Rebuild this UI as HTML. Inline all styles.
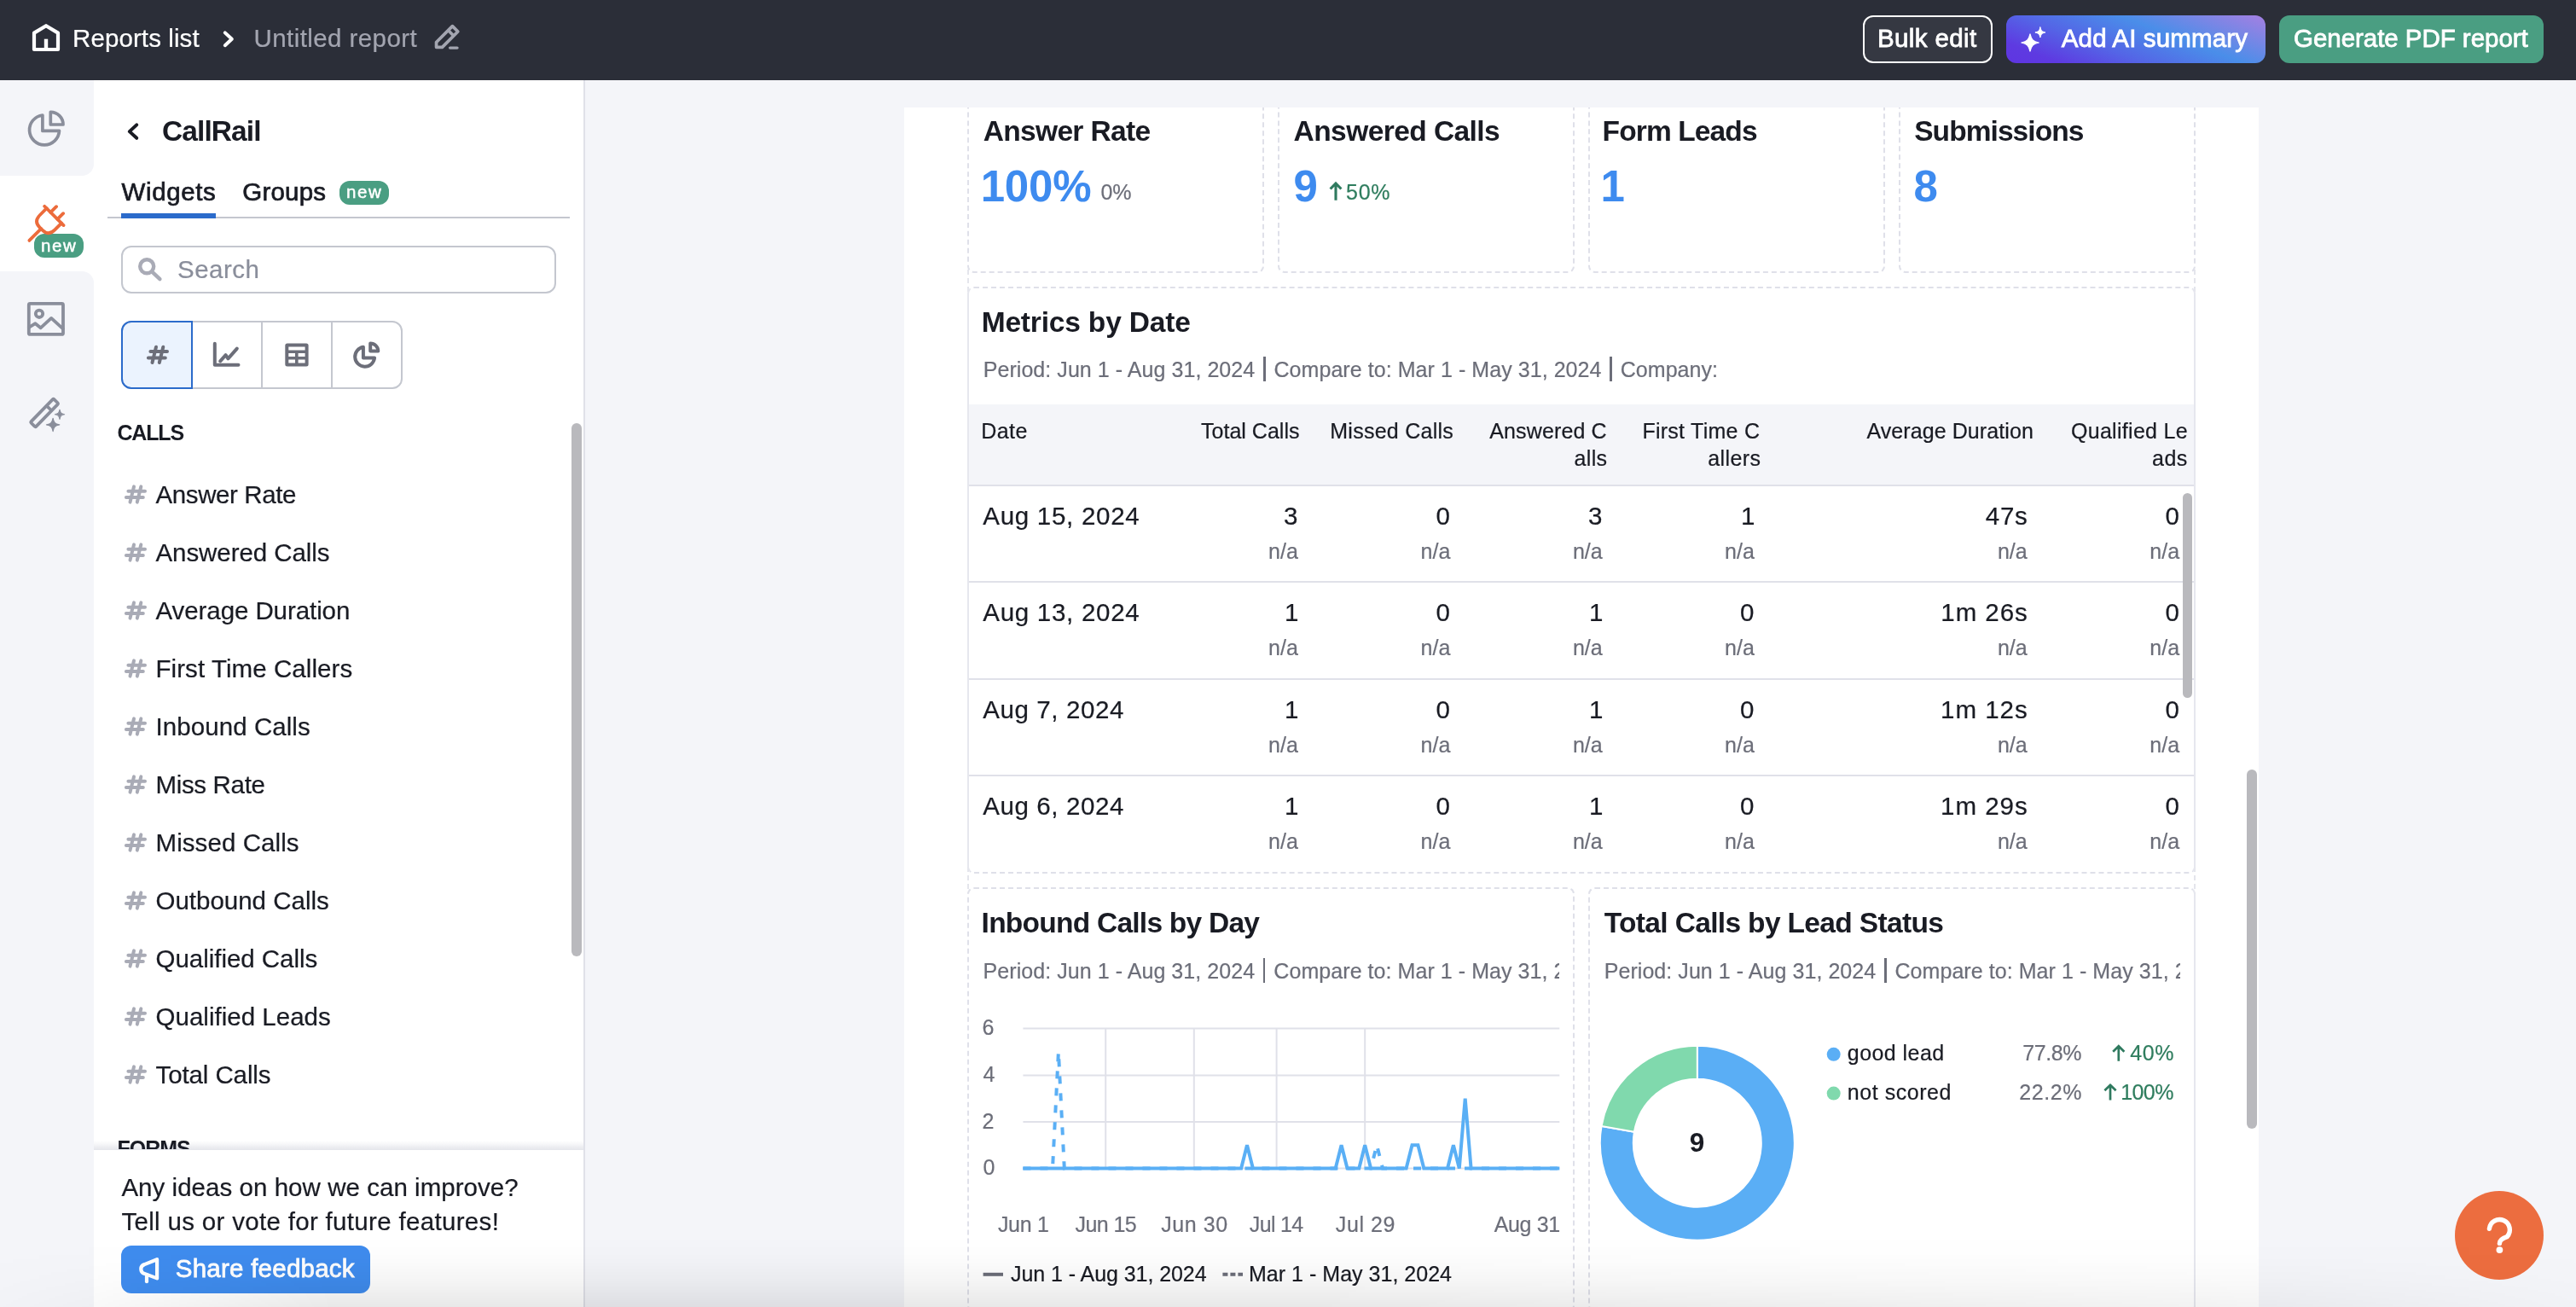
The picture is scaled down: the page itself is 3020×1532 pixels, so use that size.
<!DOCTYPE html>
<html><head><meta charset="utf-8"><title>Untitled report</title>
<style>
*{box-sizing:border-box;margin:0;padding:0}
html,body{width:3020px;height:1532px;overflow:hidden;background:#f4f5f9}
body{font-family:"Liberation Sans",sans-serif;color:#191b23;position:relative}
.a{position:absolute}
.t{position:absolute;white-space:pre;display:block;-webkit-text-stroke:.22px currentColor}
.card{position:absolute;border:2px dashed #dfe0e9;border-radius:8px;background:#fff}
.hl{position:absolute;left:1136px;width:1436px;height:2px;background:#e0e1e9}
svg{position:absolute;overflow:visible}
</style></head><body>

<!-- main area -->
<div class="a" style="left:1060px;top:126px;width:1588px;height:1406px;background:#fff"></div>
<!-- grid container dashed sides -->
<div class="a" style="left:1134px;top:126px;width:1440px;height:1406px;border-left:2px dashed #e4e5ec;border-right:2px dashed #e4e5ec"></div>

<!-- KPI cards -->
<div class="card" style="left:1134px;top:60px;width:348px;height:260px"></div>
<div class="card" style="left:1498px;top:60px;width:348px;height:260px"></div>
<div class="card" style="left:1862px;top:60px;width:348px;height:260px"></div>
<div class="card" style="left:2226px;top:60px;width:348px;height:260px"></div>
<div class="a" style="left:1060px;top:94px;width:1600px;height:32px;background:#f4f5f9"></div>

<!-- metrics table card -->
<div class="card" style="left:1134px;top:336px;width:1440px;height:688px;border-left:2px solid #e6e7ee;border-right:2px solid #e6e7ee"></div>
<div class="a" style="left:1136px;top:474px;width:1436px;height:95px;background:#f4f5f9"></div>
<div class="hl" style="top:568px"></div>
<div class="hl" style="top:681px"></div>
<div class="hl" style="top:795px"></div>
<div class="hl" style="top:908px"></div>
<div class="a" style="left:2559px;top:578px;width:11px;height:240px;border-radius:6px;background:#b9b9bd"></div>

<!-- bottom cards -->
<div class="card" style="left:1134px;top:1040px;width:712px;height:498px"></div>
<div class="card" style="left:1862px;top:1040px;width:712px;height:498px;border-right:2px solid #e6e7ee"></div>

<!-- line chart -->
<svg style="left:0;top:0" width="3020" height="1532" viewBox="0 0 3020 1532">
<g stroke="#e0e1e9" stroke-width="2" fill="none">
<path d="M1199.4 1205.6H1828.3M1199.4 1260.5H1828.3M1199.4 1315H1828.3M1199.4 1369.6H1828.3"/>
<path d="M1296.2 1205.6V1369.6M1399.8 1205.6V1369.6M1496.6 1205.6V1369.6M1600.2 1205.6V1369.6"/>
</g>
<path d="M1199.4 1369.6 L1206.3 1369.6 L1213.2 1369.6 L1220.1 1369.6 L1227.0 1369.6 L1234.0 1369.6 L1240.9 1232.9 L1247.8 1369.6 L1254.7 1369.6 L1261.6 1369.6 L1268.5 1369.6 L1275.4 1369.6 L1282.3 1369.6 L1289.2 1369.6 L1296.2 1369.6 L1303.1 1369.6 L1310.0 1369.6 L1316.9 1369.6 L1323.8 1369.6 L1330.7 1369.6 L1337.6 1369.6 L1344.5 1369.6 L1351.4 1369.6 L1358.4 1369.6 L1365.3 1369.6 L1372.2 1369.6 L1379.1 1369.6 L1386.0 1369.6 L1392.9 1369.6 L1399.8 1369.6 L1406.7 1369.6 L1413.6 1369.6 L1420.6 1369.6 L1427.5 1369.6 L1434.4 1369.6 L1441.3 1369.6 L1448.2 1369.6 L1455.1 1369.6 L1462.0 1369.6 L1468.9 1369.6 L1475.8 1369.6 L1482.8 1369.6 L1489.7 1369.6 L1496.6 1369.6 L1503.5 1369.6 L1510.4 1369.6 L1517.3 1369.6 L1524.2 1369.6 L1531.1 1369.6 L1538.0 1369.6 L1545.0 1369.6 L1551.9 1369.6 L1558.8 1369.6 L1565.7 1369.6 L1572.6 1369.6 L1579.5 1369.6 L1586.4 1369.6 L1593.3 1369.6 L1600.2 1369.6 L1607.1 1369.6 L1614.1 1342.3 L1621.0 1369.6 L1627.9 1369.6 L1634.8 1369.6 L1641.7 1369.6 L1648.6 1369.6 L1655.5 1369.6 L1662.4 1369.6 L1669.3 1369.6 L1676.3 1369.6 L1683.2 1369.6 L1690.1 1369.6 L1697.0 1369.6 L1703.9 1369.6 L1710.8 1369.6 L1717.7 1369.6 L1724.6 1369.6 L1731.5 1369.6 L1738.5 1369.6 L1745.4 1369.6 L1752.3 1369.6 L1759.2 1369.6 L1766.1 1369.6 L1773.0 1369.6 L1779.9 1369.6 L1786.8 1369.6 L1793.7 1369.6 L1800.7 1369.6 L1807.6 1369.6 L1814.5 1369.6 L1821.4 1369.6 L1828.3 1369.6" stroke="#5aaff5" stroke-width="4" stroke-dasharray="9 11" fill="none" stroke-linejoin="miter"/><path d="M1199.4 1369.6 L1206.3 1369.6 L1213.2 1369.6 L1220.1 1369.6 L1227.0 1369.6 L1234.0 1369.6 L1240.9 1369.6 L1247.8 1369.6 L1254.7 1369.6 L1261.6 1369.6 L1268.5 1369.6 L1275.4 1369.6 L1282.3 1369.6 L1289.2 1369.6 L1296.2 1369.6 L1303.1 1369.6 L1310.0 1369.6 L1316.9 1369.6 L1323.8 1369.6 L1330.7 1369.6 L1337.6 1369.6 L1344.5 1369.6 L1351.4 1369.6 L1358.4 1369.6 L1365.3 1369.6 L1372.2 1369.6 L1379.1 1369.6 L1386.0 1369.6 L1392.9 1369.6 L1399.8 1369.6 L1406.7 1369.6 L1413.6 1369.6 L1420.6 1369.6 L1427.5 1369.6 L1434.4 1369.6 L1441.3 1369.6 L1448.2 1369.6 L1455.1 1369.6 L1462.0 1342.3 L1468.9 1369.6 L1475.8 1369.6 L1482.8 1369.6 L1489.7 1369.6 L1496.6 1369.6 L1503.5 1369.6 L1510.4 1369.6 L1517.3 1369.6 L1524.2 1369.6 L1531.1 1369.6 L1538.0 1369.6 L1545.0 1369.6 L1551.9 1369.6 L1558.8 1369.6 L1565.7 1369.6 L1572.6 1342.3 L1579.5 1369.6 L1586.4 1369.6 L1593.3 1369.6 L1600.2 1342.3 L1607.1 1369.6 L1614.1 1369.6 L1621.0 1369.6 L1627.9 1369.6 L1634.8 1369.6 L1641.7 1369.6 L1648.6 1369.6 L1655.5 1342.3 L1662.4 1342.3 L1669.3 1369.6 L1676.3 1369.6 L1683.2 1369.6 L1690.1 1369.6 L1697.0 1369.6 L1703.9 1342.3 L1710.8 1369.6 L1717.7 1287.6 L1724.6 1369.6 L1731.5 1369.6 L1738.5 1369.6 L1745.4 1369.6 L1752.3 1369.6 L1759.2 1369.6 L1766.1 1369.6 L1773.0 1369.6 L1779.9 1369.6 L1786.8 1369.6 L1793.7 1369.6 L1800.7 1369.6 L1807.6 1369.6 L1814.5 1369.6 L1821.4 1369.6 L1828.3 1369.6" stroke="#5aaff5" stroke-width="4" fill="none" stroke-linejoin="miter"/>
<!-- legend markers -->
<path d="M1152.6 1493.8H1176" stroke="#6c6e79" stroke-width="4" fill="none"/>
<path d="M1433.4 1493.8H1457" stroke="#6c6e79" stroke-width="4" stroke-dasharray="6 3" fill="none"/>
<!-- donut -->
<path d="M1989.80 1225.80 A114 114 0 1 1 1877.53 1320.00 L1915.94 1326.78 A75 75 0 1 0 1989.80 1264.80Z" fill="#5aaef5" stroke="#fff" stroke-width="2"/><path d="M1877.53 1320.00 A114 114 0 0 1 1989.80 1225.80 L1989.80 1264.80 A75 75 0 0 0 1915.94 1326.78Z" fill="#80d9ad" stroke="#fff" stroke-width="2"/>
<circle cx="2149.7" cy="1235.8" r="8" fill="#5aaef5"/>
<circle cx="2149.7" cy="1281.6" r="8" fill="#80d9ad"/>
</svg>

<!-- page scrollbar -->
<div class="a" style="left:2634px;top:902px;width:12px;height:421px;border-radius:6px;background:#b9b9bd"></div>

<!-- header -->
<div class="a" style="left:0;top:0;width:3020px;height:94px;background:#2b2e38"></div>
<div class="a" style="left:2184px;top:18px;width:152px;height:56px;border:2px solid #fff;border-radius:12px;background:#353842"></div>
<div class="a" style="left:2352px;top:18px;width:304px;height:56px;border-radius:12px;background:linear-gradient(21deg,#5f35e1 0%,#5e3ae1 14%,#5465e6 36%,#4a8ee9 62%,#7b86e5 82%,#a57fe2 100%)"></div>
<div class="a" style="left:2672px;top:18px;width:310px;height:56px;border-radius:12px;background:#4a9e82"></div>

<!-- rail -->
<div class="a" style="left:0;top:94px;width:110px;height:1438px;background:#fff"></div>
<div class="a" style="left:0;top:94px;width:110px;height:112px;background:#f4f5f9;border-bottom-right-radius:14px"></div>
<div class="a" style="left:0;top:318px;width:110px;height:1214px;background:#f4f5f9;border-top-right-radius:14px"></div>

<!-- sidebar -->
<div class="a" style="left:110px;top:94px;width:576px;height:1438px;background:#fff;border-right:2px solid #e0e1e9"></div>
<div class="a" style="left:126px;top:254px;width:542px;height:2px;background:#c4c7cf"></div>
<div class="a" style="left:142px;top:250px;width:111px;height:6px;background:#2b6bcb"></div>
<div class="a" style="left:398px;top:212px;width:58px;height:28px;border-radius:12px;background:#4a9e82"></div>
<div class="a" style="left:142px;top:288px;width:510px;height:56px;border:2px solid #c4c7cf;border-radius:12px;background:#fff"></div>
<div class="a" style="left:142px;top:376px;width:330px;height:80px;border:2px solid #c4c7cf;border-radius:12px;background:#fff"></div>
<div class="a" style="left:306px;top:376px;width:2px;height:80px;background:#c4c7cf"></div>
<div class="a" style="left:388px;top:376px;width:2px;height:80px;background:#c4c7cf"></div>
<div class="a" style="left:142px;top:376px;width:84px;height:80px;border:2px solid #2b6bcb;border-radius:12px 0 0 12px;background:#ebf3fe"></div>
<div class="a" style="left:670px;top:496px;width:12px;height:625px;border-radius:6px;background:#b9b9bd"></div>
<!-- footer of sidebar -->
<div class="a" style="left:110px;top:1348px;width:574px;height:184px;background:#fff"></div>
<div class="a" style="left:142px;top:1460px;width:292px;height:56px;border-radius:12px;background:#3f8cee"></div>
<div class="a" style="left:40px;top:274px;width:58px;height:28px;border-radius:12px;background:#4a9e82"></div>

<!-- icons -->
<svg style="left:0;top:0" width="3020" height="1532" viewBox="0 0 3020 1532" fill="none" stroke-linecap="round" stroke-linejoin="round">

<!-- home -->
<path d="M40 38.6L54 30.2L68 38.6V58H40Z" stroke="#fff" stroke-width="4.2"/>
<path d="M54 58V45.7" stroke="#fff" stroke-width="4.4" stroke-linecap="butt"/>
<!-- chevron right -->
<path d="M263.8 38.4L271.8 45.8L263.8 53.2" stroke="#fff" stroke-width="4"/>
<!-- pencil -->
<g stroke="#a3a5b0" stroke-width="3.7">
<path d="M530.4 30.6L536.8 37L518.45 55.35H511.55V49.45Z"/>
<path d="M525.45 35.55L531.85 41.95" stroke-linecap="butt"/>
<path d="M527.6 56.1H536" stroke-width="3.4"/>
</g>
<!-- sparkles (AI) -->
<path d="M2380 39.8 C2381.6 46.6 2383.4 48.4 2390.2 50 C2383.4 51.6 2381.6 53.4 2380 60.2 C2378.4 53.4 2376.6 51.6 2369.8 50 C2376.6 48.4 2378.4 46.6 2380 39.8Z" fill="#fff" stroke="#fff" stroke-width="1.2"/>
<path d="M2391.9 32 C2392.9 36 2393.9 37 2397.9 38 C2393.9 39 2392.9 40 2391.9 44 C2390.9 40 2389.9 39 2385.9 38 C2389.9 37 2390.9 36 2391.9 32Z" fill="#fff" stroke="#fff" stroke-width="1"/>
<!-- rail: pie -->
<g stroke="#8a8e9b" stroke-width="3.7">
<path d="M49.9 135A17.5 17.5 0 1 0 69.5 153.4H49.9Z"/>
<path d="M59.3 146V131.3A14.7 14.7 0 0 1 74 146Z"/>
</g>
<!-- rail: plug -->
<g stroke="#ec6b3b" stroke-width="3.8" transform="translate(63.35 252.9) rotate(45)">
<path d="M-15.8 0H15.8"/>
<path d="M-12.3 0V11Q-12.3 21.5 -2.5 21.5H2.5Q12.3 21.5 12.3 11V0"/>
<path d="M-5.7 0V-9.5M5.7 0V-9.5"/>
<path d="M0 21.5V41"/>
</g>
<!-- rail: image -->
<g stroke="#8a8e9b" stroke-width="3.8">
<rect x="33.8" y="355.9" width="40.2" height="36" rx="1.5"/>
<circle cx="46" cy="367.8" r="4.2"/>
<path d="M33.8 383.8L41.4 379.2L47.6 384.3L60.1 372.9L73.8 385.3"/>
</g>
<!-- rail: wand -->
<g stroke="#8a8e9b" stroke-width="3.7" transform="translate(52.1 484) rotate(-45.8)">
<rect x="-19.3" y="-4.1" width="38.6" height="8.2" rx="1.5"/>
<path d="M7.8 -4.1V4.1" stroke-linecap="butt"/>
</g>
<path d="M62.1 490.3 C62.9 495.4 64.6 497.1 69.7 497.9 C64.6 498.7 62.9 500.4 62.1 505.5 C61.3 500.4 59.6 498.7 54.5 497.9 C59.6 497.1 61.3 495.4 62.1 490.3Z" fill="#8a8e9b" stroke="#8a8e9b" stroke-width="1.3"/>
<path d="M70 480.2 C70.6 484 71.8 485.2 75.6 485.8 C71.8 486.4 70.6 487.6 70 491.4 C69.4 487.6 68.2 486.4 64.4 485.8 C68.2 485.2 69.4 484 70 480.2Z" fill="#8a8e9b" stroke="#8a8e9b" stroke-width="1.1"/>
<!-- back chevron -->
<path d="M160.2 146.4L151.8 154.1L160.2 161.8" stroke="#191b23" stroke-width="4"/>
<!-- search -->
<g stroke="#a9abb6" stroke-width="4.4">
<circle cx="172.2" cy="312.3" r="8"/>
<path d="M178.6 318.8L187.4 327.2"/>
</g>
<!-- toolbar: line chart -->
<g stroke="#6c6e79" stroke-width="4">
<path d="M251.8 402.7V427.8H279.5"/>
<path d="M258.2 423.3L264.6 416.2L267.4 420.3L277.8 408.6"/>
</g>
<!-- toolbar: table -->
<rect x="334.3" y="402.6" width="27.3" height="27" rx="2.5" fill="#6c6e79"/>
<rect x="338.3" y="406.5" width="19.3" height="4" fill="#fff"/>
<rect x="338.3" y="414" width="7.7" height="4" fill="#fff"/>
<rect x="349.6" y="414" width="8" height="4" fill="#fff"/>
<rect x="338.3" y="421.5" width="7.7" height="4" fill="#fff"/>
<rect x="349.6" y="421.5" width="8" height="4" fill="#fff"/>
<!-- toolbar: pie -->
<g stroke="#6c6e79" stroke-width="4">
<path d="M425.9 406.8A11.5 11.5 0 1 0 439.1 419.6H425.9Z"/>
<path d="M434.2 411.5V402.4A9.1 9.1 0 0 1 443.3 411.5Z"/>
</g>
<!-- megaphone -->
<g stroke="#fff" stroke-width="4.2">
<path d="M184.1 1476.2L169.4 1482.1A5.6 5.6 0 0 0 169.4 1492.9L184.1 1498.4Z"/>
<path d="M172 1494V1502.2"/>
</g>
<!-- arrows -->
<path d="M1559.6 221.5L1566 215.0L1572.4 221.5M1566 215.7V234.7" stroke="#2f7a5f" stroke-width="3.1" stroke-linecap="butt" stroke-linejoin="miter"/><path d="M2477.2 1232.7L2483.8 1226.2L2490.4 1232.7M2483.8 1226.9V1243.8" stroke="#2f7a5f" stroke-width="2.7" stroke-linecap="butt" stroke-linejoin="miter"/><path d="M2467.4 1278.3L2474 1271.8L2480.6 1278.3M2474 1272.5V1289.4" stroke="#2f7a5f" stroke-width="2.7" stroke-linecap="butt" stroke-linejoin="miter"/>
<path transform="translate(0 0)" d="M150.4 575.7H170M147.9 583H167.8M157 570.4L152.5 588.6M165.3 570.4L160.8 588.6" stroke="#a9abb6" stroke-width="4"/><path transform="translate(0 68)" d="M150.4 575.7H170M147.9 583H167.8M157 570.4L152.5 588.6M165.3 570.4L160.8 588.6" stroke="#a9abb6" stroke-width="4"/><path transform="translate(0 136)" d="M150.4 575.7H170M147.9 583H167.8M157 570.4L152.5 588.6M165.3 570.4L160.8 588.6" stroke="#a9abb6" stroke-width="4"/><path transform="translate(0 204)" d="M150.4 575.7H170M147.9 583H167.8M157 570.4L152.5 588.6M165.3 570.4L160.8 588.6" stroke="#a9abb6" stroke-width="4"/><path transform="translate(0 272)" d="M150.4 575.7H170M147.9 583H167.8M157 570.4L152.5 588.6M165.3 570.4L160.8 588.6" stroke="#a9abb6" stroke-width="4"/><path transform="translate(0 340)" d="M150.4 575.7H170M147.9 583H167.8M157 570.4L152.5 588.6M165.3 570.4L160.8 588.6" stroke="#a9abb6" stroke-width="4"/><path transform="translate(0 408)" d="M150.4 575.7H170M147.9 583H167.8M157 570.4L152.5 588.6M165.3 570.4L160.8 588.6" stroke="#a9abb6" stroke-width="4"/><path transform="translate(0 476)" d="M150.4 575.7H170M147.9 583H167.8M157 570.4L152.5 588.6M165.3 570.4L160.8 588.6" stroke="#a9abb6" stroke-width="4"/><path transform="translate(0 544)" d="M150.4 575.7H170M147.9 583H167.8M157 570.4L152.5 588.6M165.3 570.4L160.8 588.6" stroke="#a9abb6" stroke-width="4"/><path transform="translate(0 612)" d="M150.4 575.7H170M147.9 583H167.8M157 570.4L152.5 588.6M165.3 570.4L160.8 588.6" stroke="#a9abb6" stroke-width="4"/><path transform="translate(0 680)" d="M150.4 575.7H170M147.9 583H167.8M157 570.4L152.5 588.6M165.3 570.4L160.8 588.6" stroke="#a9abb6" stroke-width="4"/><path transform="translate(26 -163.6)" d="M150.4 575.7H170M147.9 583H167.8M157 570.4L152.5 588.6M165.3 570.4L160.8 588.6" stroke="#6c6e79" stroke-width="4"/>
</svg>

<!-- help -->
<div class="a" style="left:2878px;top:1396px;width:104px;height:104px;border-radius:52px;background:#ec6d3f"></div>
<svg style="left:0;top:0" width="3020" height="1532" viewBox="0 0 3020 1532" fill="none"><path d="M2918.4 1440.3A12 12 0 1 1 2939.2 1449.6Q2930.4 1452.5 2930.4 1457.4" stroke="#fff" stroke-width="5.4" stroke-linecap="round"/><circle cx="2930.4" cy="1465.1" r="3.9" fill="#fff"/></svg>

<div class="a" style="left:0;top:0;width:3020px;height:1532px;will-change:transform">
<span class="t" style="top:30px;font-size:29.5px;line-height:29.5px;color:#ffffff;letter-spacing:0.1px;left:85.0px;">Reports list</span>
<span class="t" style="top:30px;font-size:29.5px;line-height:29.5px;color:#a3a5b0;letter-spacing:0.42px;left:297.5px;">Untitled report</span>
<span class="t" style="top:30px;font-size:29.5px;line-height:29.5px;color:#ffffff;letter-spacing:0.38px;left:2201.0px;-webkit-text-stroke:.8px #fff;">Bulk edit</span>
<span class="t" style="top:30px;font-size:29.5px;line-height:29.5px;color:#ffffff;letter-spacing:0.13px;left:2416.8px;-webkit-text-stroke:.8px #fff;">Add AI summary</span>
<span class="t" style="top:30px;font-size:29.5px;line-height:29.5px;color:#ffffff;letter-spacing:-0.04px;left:2689.0px;-webkit-text-stroke:.8px #fff;">Generate PDF report</span>
<span class="t" style="top:137px;font-size:33.5px;line-height:33.5px;font-weight:700;-webkit-text-stroke:0;letter-spacing:-0.88px;left:189.9px;">CallRail</span>
<span class="t" style="top:210px;font-size:29.5px;line-height:29.5px;letter-spacing:0.6px;left:142.6px;-webkit-text-stroke:.7px #191b23;">Widgets</span>
<span class="t" style="top:210px;font-size:29.5px;line-height:29.5px;letter-spacing:0.2px;left:284.3px;-webkit-text-stroke:.7px #191b23;">Groups</span>
<span class="t" style="top:215px;font-size:20.5px;line-height:20.5px;color:#ffffff;letter-spacing:1.6px;left:406.0px;-webkit-text-stroke:.5px #fff;">new</span>
<span class="t" style="top:278px;font-size:20.5px;line-height:20.5px;color:#ffffff;letter-spacing:1.6px;left:48.0px;-webkit-text-stroke:.5px #fff;">new</span>
<span class="t" style="top:301px;font-size:29.5px;line-height:29.5px;color:#8a8e9b;letter-spacing:0.47px;left:208.0px;">Search</span>
<span class="t" style="top:495px;font-size:25.0px;line-height:25.0px;font-weight:700;-webkit-text-stroke:0;letter-spacing:-1.16px;left:137.4px;">CALLS</span>
<span class="t" style="top:565px;font-size:29.5px;line-height:29.5px;letter-spacing:-0.4px;left:182.5px;">Answer Rate</span>
<span class="t" style="top:633px;font-size:29.5px;line-height:29.5px;letter-spacing:-0.07px;left:182.5px;">Answered Calls</span>
<span class="t" style="top:701px;font-size:29.5px;line-height:29.5px;letter-spacing:-0.08px;left:182.5px;">Average Duration</span>
<span class="t" style="top:769px;font-size:29.5px;line-height:29.5px;letter-spacing:0.07px;left:182.5px;">First Time Callers</span>
<span class="t" style="top:837px;font-size:29.5px;line-height:29.5px;letter-spacing:0.07px;left:182.5px;">Inbound Calls</span>
<span class="t" style="top:905px;font-size:29.5px;line-height:29.5px;letter-spacing:-0.34px;left:182.5px;">Miss Rate</span>
<span class="t" style="top:973px;font-size:29.5px;line-height:29.5px;letter-spacing:0.08px;left:182.5px;">Missed Calls</span>
<span class="t" style="top:1041px;font-size:29.5px;line-height:29.5px;letter-spacing:-0.01px;left:182.5px;">Outbound Calls</span>
<span class="t" style="top:1109px;font-size:29.5px;line-height:29.5px;letter-spacing:-0.03px;left:182.5px;">Qualified Calls</span>
<span class="t" style="top:1177px;font-size:29.5px;line-height:29.5px;letter-spacing:0.02px;left:182.5px;">Qualified Leads</span>
<span class="t" style="top:1245px;font-size:29.5px;line-height:29.5px;letter-spacing:-0.1px;left:182.5px;">Total Calls</span>
<span class="t" style="top:1334px;font-size:25.0px;line-height:25.0px;font-weight:700;-webkit-text-stroke:0;letter-spacing:-0.97px;left:137.4px;height:13px;overflow:hidden;">FORMS</span>
<span class="t" style="top:1377px;font-size:29.5px;line-height:29.5px;letter-spacing:0.04px;left:142.4px;">Any ideas on how we can improve?</span>
<span class="t" style="top:1417px;font-size:29.5px;line-height:29.5px;letter-spacing:0.32px;left:142.4px;">Tell us or vote for future features!</span>
<span class="t" style="top:1472px;font-size:29.5px;line-height:29.5px;color:#ffffff;letter-spacing:0.24px;left:205.8px;-webkit-text-stroke:.8px #fff;">Share feedback</span>
<span class="t" style="top:137px;font-size:33.5px;line-height:33.5px;font-weight:700;-webkit-text-stroke:0;letter-spacing:-0.66px;left:1152.7px;">Answer Rate</span>
<span class="t" style="top:137px;font-size:33.5px;line-height:33.5px;font-weight:700;-webkit-text-stroke:0;letter-spacing:-0.57px;left:1516.6px;">Answered Calls</span>
<span class="t" style="top:137px;font-size:33.5px;line-height:33.5px;font-weight:700;-webkit-text-stroke:0;letter-spacing:-0.88px;left:1878.6px;">Form Leads</span>
<span class="t" style="top:137px;font-size:33.5px;line-height:33.5px;font-weight:700;-webkit-text-stroke:0;letter-spacing:-0.93px;left:2244.2px;">Submissions</span>
<span class="t" style="top:193px;font-size:51px;line-height:51px;font-weight:700;-webkit-text-stroke:0;color:#3e8bef;letter-spacing:-0.2px;left:1149.7px;">100%</span>
<span class="t" style="top:213px;font-size:25.0px;line-height:25.0px;color:#6c6e79;letter-spacing:-0.2px;left:1290.6px;">0%</span>
<span class="t" style="top:193px;font-size:51px;line-height:51px;font-weight:700;-webkit-text-stroke:0;color:#3e8bef;left:1516.4px;">9</span>
<span class="t" style="top:213px;font-size:25.0px;line-height:25.0px;color:#2f7d5e;letter-spacing:0.75px;left:1578.0px;">50%</span>
<span class="t" style="top:193px;font-size:51px;line-height:51px;font-weight:700;-webkit-text-stroke:0;color:#3e8bef;left:1876.5px;">1</span>
<span class="t" style="top:193px;font-size:51px;line-height:51px;font-weight:700;-webkit-text-stroke:0;color:#3e8bef;left:2243.5px;">8</span>
<span class="t" style="top:361px;font-size:33.5px;line-height:33.5px;font-weight:700;-webkit-text-stroke:0;letter-spacing:-0.18px;left:1150.7px;">Metrics by Date</span>
<span class="t" style="top:421px;font-size:25.0px;line-height:25.0px;color:#6c6e79;letter-spacing:0.06px;left:1152.7px;height:32px;line-height:32px;margin-top:-4.5px;">Period: Jun 1 - Aug 31, 2024 <span style="display:inline-block;width:2.4px;height:28.6px;background:#6c6e79;vertical-align:-5.4px;margin:0 2.9px"></span> Compare to: Mar 1 - May 31, 2024 <span style="display:inline-block;width:2.4px;height:28.6px;background:#6c6e79;vertical-align:-5.4px;margin:0 2.9px"></span> Company:</span>
<span class="t" style="top:493px;font-size:25.0px;line-height:25.0px;letter-spacing:0.4px;left:1150.3px;">Date</span>
<span class="t" style="top:493px;font-size:25.0px;line-height:25.0px;letter-spacing:0.02px;left:1408.0px;">Total Calls</span>
<span class="t" style="top:493px;font-size:25.0px;line-height:25.0px;letter-spacing:0.25px;left:1559.3px;">Missed Calls</span>
<span class="t" style="top:493px;font-size:25.0px;line-height:25.0px;letter-spacing:0.14px;left:1746.2px;">Answered C</span>
<span class="t" style="top:525px;font-size:25.0px;line-height:25.0px;letter-spacing:0.4px;left:1845.4px;">alls</span>
<span class="t" style="top:493px;font-size:25.0px;line-height:25.0px;letter-spacing:0.26px;left:1925.4px;">First Time C</span>
<span class="t" style="top:525px;font-size:25.0px;line-height:25.0px;letter-spacing:0.4px;left:2002.2px;">allers</span>
<span class="t" style="top:493px;font-size:25.0px;line-height:25.0px;letter-spacing:0.09px;left:2188.4px;">Average Duration</span>
<span class="t" style="top:493px;font-size:25.0px;line-height:25.0px;letter-spacing:0.29px;left:2428.0px;">Qualified Le</span>
<span class="t" style="top:525px;font-size:25.0px;line-height:25.0px;letter-spacing:0.4px;left:2523.1px;">ads</span>
<span class="t" style="top:590px;font-size:29.5px;line-height:29.5px;letter-spacing:0.72px;left:1152.3px;">Aug 15, 2024</span>
<span class="t" style="top:590px;font-size:29.5px;line-height:29.5px;letter-spacing:0.47px;left:1505.1px;">3</span>
<span class="t" style="top:634px;font-size:25.0px;line-height:25.0px;color:#6c6e79;letter-spacing:0.03px;left:1487.0px;">n/a</span>
<span class="t" style="top:590px;font-size:29.5px;line-height:29.5px;letter-spacing:0.47px;left:1683.6px;">0</span>
<span class="t" style="top:634px;font-size:25.0px;line-height:25.0px;color:#6c6e79;letter-spacing:0.03px;left:1665.5px;">n/a</span>
<span class="t" style="top:590px;font-size:29.5px;line-height:29.5px;letter-spacing:0.47px;left:1862.0px;">3</span>
<span class="t" style="top:634px;font-size:25.0px;line-height:25.0px;color:#6c6e79;letter-spacing:0.03px;left:1843.9px;">n/a</span>
<span class="t" style="top:590px;font-size:29.5px;line-height:29.5px;letter-spacing:0.47px;left:2041.1px;">1</span>
<span class="t" style="top:634px;font-size:25.0px;line-height:25.0px;color:#6c6e79;letter-spacing:0.03px;left:2022.0px;">n/a</span>
<span class="t" style="top:590px;font-size:29.5px;line-height:29.5px;letter-spacing:0.69px;left:2327.8px;">47s</span>
<span class="t" style="top:634px;font-size:25.0px;line-height:25.0px;color:#6c6e79;letter-spacing:0.03px;left:2341.9px;">n/a</span>
<span class="t" style="top:590px;font-size:29.5px;line-height:29.5px;letter-spacing:0.47px;left:2538.4px;">0</span>
<span class="t" style="top:634px;font-size:25.0px;line-height:25.0px;color:#6c6e79;letter-spacing:0.03px;left:2520.3px;">n/a</span>
<span class="t" style="top:703px;font-size:29.5px;line-height:29.5px;letter-spacing:0.72px;left:1152.3px;">Aug 13, 2024</span>
<span class="t" style="top:703px;font-size:29.5px;line-height:29.5px;letter-spacing:0.47px;left:1506.1px;">1</span>
<span class="t" style="top:747px;font-size:25.0px;line-height:25.0px;color:#6c6e79;letter-spacing:0.03px;left:1487.0px;">n/a</span>
<span class="t" style="top:703px;font-size:29.5px;line-height:29.5px;letter-spacing:0.47px;left:1683.6px;">0</span>
<span class="t" style="top:747px;font-size:25.0px;line-height:25.0px;color:#6c6e79;letter-spacing:0.03px;left:1665.5px;">n/a</span>
<span class="t" style="top:703px;font-size:29.5px;line-height:29.5px;letter-spacing:0.47px;left:1863.0px;">1</span>
<span class="t" style="top:747px;font-size:25.0px;line-height:25.0px;color:#6c6e79;letter-spacing:0.03px;left:1843.9px;">n/a</span>
<span class="t" style="top:703px;font-size:29.5px;line-height:29.5px;letter-spacing:0.47px;left:2040.1px;">0</span>
<span class="t" style="top:747px;font-size:25.0px;line-height:25.0px;color:#6c6e79;letter-spacing:0.03px;left:2022.0px;">n/a</span>
<span class="t" style="top:703px;font-size:29.5px;line-height:29.5px;letter-spacing:0.94px;left:2275.3px;">1m 26s</span>
<span class="t" style="top:747px;font-size:25.0px;line-height:25.0px;color:#6c6e79;letter-spacing:0.03px;left:2341.9px;">n/a</span>
<span class="t" style="top:703px;font-size:29.5px;line-height:29.5px;letter-spacing:0.47px;left:2538.4px;">0</span>
<span class="t" style="top:747px;font-size:25.0px;line-height:25.0px;color:#6c6e79;letter-spacing:0.03px;left:2520.3px;">n/a</span>
<span class="t" style="top:817px;font-size:29.5px;line-height:29.5px;letter-spacing:0.59px;left:1152.3px;">Aug 7, 2024</span>
<span class="t" style="top:817px;font-size:29.5px;line-height:29.5px;letter-spacing:0.47px;left:1506.1px;">1</span>
<span class="t" style="top:861px;font-size:25.0px;line-height:25.0px;color:#6c6e79;letter-spacing:0.03px;left:1487.0px;">n/a</span>
<span class="t" style="top:817px;font-size:29.5px;line-height:29.5px;letter-spacing:0.47px;left:1683.6px;">0</span>
<span class="t" style="top:861px;font-size:25.0px;line-height:25.0px;color:#6c6e79;letter-spacing:0.03px;left:1665.5px;">n/a</span>
<span class="t" style="top:817px;font-size:29.5px;line-height:29.5px;letter-spacing:0.47px;left:1863.0px;">1</span>
<span class="t" style="top:861px;font-size:25.0px;line-height:25.0px;color:#6c6e79;letter-spacing:0.03px;left:1843.9px;">n/a</span>
<span class="t" style="top:817px;font-size:29.5px;line-height:29.5px;letter-spacing:0.47px;left:2040.1px;">0</span>
<span class="t" style="top:861px;font-size:25.0px;line-height:25.0px;color:#6c6e79;letter-spacing:0.03px;left:2022.0px;">n/a</span>
<span class="t" style="top:817px;font-size:29.5px;line-height:29.5px;letter-spacing:0.98px;left:2275.1px;">1m 12s</span>
<span class="t" style="top:861px;font-size:25.0px;line-height:25.0px;color:#6c6e79;letter-spacing:0.03px;left:2341.9px;">n/a</span>
<span class="t" style="top:817px;font-size:29.5px;line-height:29.5px;letter-spacing:0.47px;left:2538.4px;">0</span>
<span class="t" style="top:861px;font-size:25.0px;line-height:25.0px;color:#6c6e79;letter-spacing:0.03px;left:2520.3px;">n/a</span>
<span class="t" style="top:930px;font-size:29.5px;line-height:29.5px;letter-spacing:0.59px;left:1152.3px;">Aug 6, 2024</span>
<span class="t" style="top:930px;font-size:29.5px;line-height:29.5px;letter-spacing:0.47px;left:1506.1px;">1</span>
<span class="t" style="top:974px;font-size:25.0px;line-height:25.0px;color:#6c6e79;letter-spacing:0.03px;left:1487.0px;">n/a</span>
<span class="t" style="top:930px;font-size:29.5px;line-height:29.5px;letter-spacing:0.47px;left:1683.6px;">0</span>
<span class="t" style="top:974px;font-size:25.0px;line-height:25.0px;color:#6c6e79;letter-spacing:0.03px;left:1665.5px;">n/a</span>
<span class="t" style="top:930px;font-size:29.5px;line-height:29.5px;letter-spacing:0.47px;left:1863.0px;">1</span>
<span class="t" style="top:974px;font-size:25.0px;line-height:25.0px;color:#6c6e79;letter-spacing:0.03px;left:1843.9px;">n/a</span>
<span class="t" style="top:930px;font-size:29.5px;line-height:29.5px;letter-spacing:0.47px;left:2040.1px;">0</span>
<span class="t" style="top:974px;font-size:25.0px;line-height:25.0px;color:#6c6e79;letter-spacing:0.03px;left:2022.0px;">n/a</span>
<span class="t" style="top:930px;font-size:29.5px;line-height:29.5px;letter-spacing:1.0px;left:2275.0px;">1m 29s</span>
<span class="t" style="top:974px;font-size:25.0px;line-height:25.0px;color:#6c6e79;letter-spacing:0.03px;left:2341.9px;">n/a</span>
<span class="t" style="top:930px;font-size:29.5px;line-height:29.5px;letter-spacing:0.47px;left:2538.4px;">0</span>
<span class="t" style="top:974px;font-size:25.0px;line-height:25.0px;color:#6c6e79;letter-spacing:0.03px;left:2520.3px;">n/a</span>
<span class="t" style="top:1065px;font-size:33.5px;line-height:33.5px;font-weight:700;-webkit-text-stroke:0;letter-spacing:-0.75px;left:1150.6px;">Inbound Calls by Day</span>
<span class="t" style="top:1065px;font-size:33.5px;line-height:33.5px;font-weight:700;-webkit-text-stroke:0;letter-spacing:-0.65px;left:1880.7px;">Total Calls by Lead Status</span>
<span class="t" style="top:1126px;font-size:25.0px;line-height:25.0px;color:#6c6e79;letter-spacing:0.06px;left:1152.6px;width:675.7px;height:32px;line-height:32px;margin-top:-4.5px;overflow:hidden;">Period: Jun 1 - Aug 31, 2024 <span style="display:inline-block;width:2.4px;height:28.6px;background:#6c6e79;vertical-align:-5.4px;margin:0 2.9px"></span> Compare to: Mar 1 - May 31, 2024 <span style="display:inline-block;width:2.4px;height:28.6px;background:#6c6e79;vertical-align:-5.4px;margin:0 2.9px"></span> Company:</span>
<span class="t" style="top:1126px;font-size:25.0px;line-height:25.0px;color:#6c6e79;letter-spacing:0.06px;left:1880.7px;width:675.6px;height:32px;line-height:32px;margin-top:-4.5px;overflow:hidden;">Period: Jun 1 - Aug 31, 2024 <span style="display:inline-block;width:2.4px;height:28.6px;background:#6c6e79;vertical-align:-5.4px;margin:0 2.9px"></span> Compare to: Mar 1 - May 31, 2024 <span style="display:inline-block;width:2.4px;height:28.6px;background:#6c6e79;vertical-align:-5.4px;margin:0 2.9px"></span> Company:</span>
<span class="t" style="top:1192px;font-size:25.0px;line-height:25.0px;color:#6c6e79;letter-spacing:0.4px;left:1151.6px;">6</span>
<span class="t" style="top:1247px;font-size:25.0px;line-height:25.0px;color:#6c6e79;letter-spacing:0.4px;left:1152.6px;">4</span>
<span class="t" style="top:1302px;font-size:25.0px;line-height:25.0px;color:#6c6e79;letter-spacing:0.4px;left:1151.6px;">2</span>
<span class="t" style="top:1356px;font-size:25.0px;line-height:25.0px;color:#6c6e79;letter-spacing:0.4px;left:1152.6px;">0</span>
<span class="t" style="top:1423px;font-size:25.0px;line-height:25.0px;color:#6c6e79;letter-spacing:-0.31px;left:1169.9px;">Jun 1</span>
<span class="t" style="top:1423px;font-size:25.0px;line-height:25.0px;color:#6c6e79;letter-spacing:-0.59px;left:1260.6px;">Jun 15</span>
<span class="t" style="top:1423px;font-size:25.0px;line-height:25.0px;color:#6c6e79;letter-spacing:0.55px;left:1361.3px;">Jun 30</span>
<span class="t" style="top:1423px;font-size:25.0px;line-height:25.0px;color:#6c6e79;letter-spacing:-0.66px;left:1464.8px;">Jul 14</span>
<span class="t" style="top:1423px;font-size:25.0px;line-height:25.0px;color:#6c6e79;letter-spacing:0.6px;left:1565.8px;">Jul 29</span>
<span class="t" style="top:1423px;font-size:25.0px;line-height:25.0px;color:#6c6e79;letter-spacing:-0.35px;left:1751.7px;">Aug 31</span>
<span class="t" style="top:1481px;font-size:25.0px;line-height:25.0px;letter-spacing:-0.06px;left:1185.0px;">Jun 1 - Aug 31, 2024</span>
<span class="t" style="top:1481px;font-size:25.0px;line-height:25.0px;letter-spacing:0.02px;left:1464.0px;">Mar 1 - May 31, 2024</span>
<span class="t" style="top:1324px;font-size:31.5px;line-height:31.5px;font-weight:700;-webkit-text-stroke:0;left:1980.8px;">9</span>
<span class="t" style="top:1222px;font-size:25.0px;line-height:25.0px;letter-spacing:0.45px;left:2165.8px;">good lead</span>
<span class="t" style="top:1268px;font-size:25.0px;line-height:25.0px;letter-spacing:0.54px;left:2165.8px;">not scored</span>
<span class="t" style="top:1222px;font-size:25.0px;line-height:25.0px;color:#6c6e79;letter-spacing:-0.41px;left:2371.3px;">77.8%</span>
<span class="t" style="top:1268px;font-size:25.0px;line-height:25.0px;color:#6c6e79;letter-spacing:0.59px;left:2367.3px;">22.2%</span>
<span class="t" style="top:1222px;font-size:25.0px;line-height:25.0px;color:#2f7d5e;letter-spacing:0.6px;left:2497.2px;">40%</span>
<span class="t" style="top:1268px;font-size:25.0px;line-height:25.0px;color:#2f7d5e;letter-spacing:-0.57px;left:2486.2px;">100%</span>
</div>

<div class="a" style="left:110px;top:1337px;width:574px;height:11px;background:linear-gradient(to bottom,rgba(40,45,90,0) 0%,rgba(40,45,90,.035) 35%,rgba(40,45,90,.125) 100%)"></div>
<!-- bottom shade -->
<div class="a" style="left:0;top:1450px;width:3020px;height:82px;background:linear-gradient(to bottom,rgba(0,0,0,0) 0%,rgba(0,0,0,.012) 30%,rgba(0,0,0,.04) 62%,rgba(0,0,0,.09) 100%);-webkit-mask-image:linear-gradient(to right,rgba(0,0,0,.1) 0,rgba(0,0,0,.25) 3.5%,#000 13%,#000 50%,rgba(0,0,0,.55) 86%,rgba(0,0,0,.12) 100%);mask-image:linear-gradient(to right,rgba(0,0,0,.1) 0,rgba(0,0,0,.25) 3.5%,#000 13%,#000 50%,rgba(0,0,0,.55) 86%,rgba(0,0,0,.12) 100%)"></div>
<script>(function(){var z=window.innerWidth/3020;if(Math.abs(z-1)>0.001){document.documentElement.style.zoom=z;}})();</script>
</body></html>
